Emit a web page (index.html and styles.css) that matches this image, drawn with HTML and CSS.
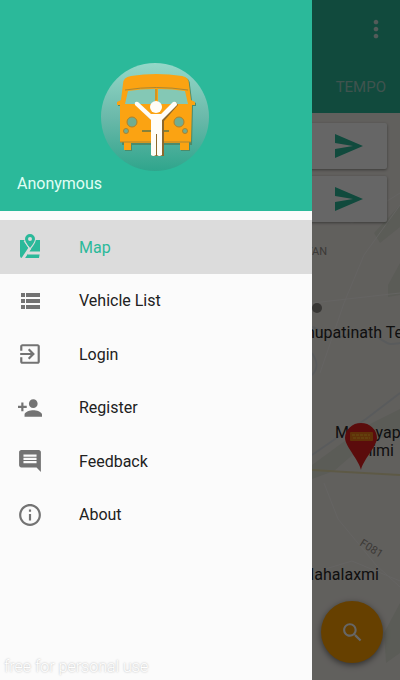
FILE: index.html
```html
<!DOCTYPE html>
<html lang="en">
<head>
    <meta charset="UTF-8">
    <meta name="viewport" content="width=device-width, initial-scale=1.0">
    <title>Map</title>
    <link rel="stylesheet" href="styles.css">
</head>
<body>
    <!-- Map screen -->
    <div class="screen">
        <header class="app-bar">
            <div class="toolbar">
                <button class="icon-button" type="button" aria-label="More options">
                    <svg viewBox="0 0 24 24" width="28" height="28"><path d="M12 8c1.1 0 2-.9 2-2s-.9-2-2-2-2 .9-2 2 .9 2 2 2zm0 2c-1.1 0-2 .9-2 2s.9 2 2 2 2-.9 2-2-.9-2-2-2zm0 6c-1.1 0-2 .9-2 2s.9 2 2 2 2-.9 2-2-.9-2-2-2z"/></svg>
                </button>
            </div>
            <nav class="tabs">
                <a class="tab" href="#tempo">TEMPO</a>
            </nav>
        </header>

        <main class="map">
            <svg class="map-canvas" viewBox="0 0 400 567" preserveAspectRatio="xMaxYMin slice">
                <rect width="400" height="567" fill="#f3efe9"/>
                <path class="green" d="M400 150L388 172 388 184 400 182zM400 92l-26 28 6 10 20-16zM312 352l30-22 30-20 28-14v22l-36 14-30 26-22 8zM384 520l16-30v50l-14 10z"/>
                <path class="river" d="M312 214c10 2 14 12 28 10s18-12 34-2 14 10 26 8M312 262c8-8 4-16 0-22M312 342l26-18 28-18 34-26"/>
                <path class="road" d="M312 90l40 20 48-30M320 260l24-70 20-48 36-50M312 190l88-10M324 370l14 36 38 46 24 22M312 460l40-12 48 20"/>
                <path class="highway" d="M312 357l34 2 54 3"/>
                <circle cx="317" cy="195" r="5" fill="#8c8984"/>
                <text class="district" x="327" y="142" text-anchor="end">YAN</text>
                <text class="place" x="279" y="225">Pashupatinath Temple</text>
                <text class="place" x="335" y="325">Madhyapur</text>
                <text class="place" x="394" y="343" text-anchor="end">Thimi</text>
                <text class="place" x="379" y="467" text-anchor="end">Mahalaxmi</text>
                <text class="road-name" transform="translate(359 432) rotate(32)">F081</text>
                <!-- Vehicle pin -->
                <path d="M361 357c-2-10-16-24-16-32a16 15 0 0 1 32 0c0 8-14 22-16 32z" fill="#e4201f"/>
                <rect x="350" y="319" width="23" height="9" rx="1" fill="#f07c14"/>
                <path d="M352 322h18M353 325h17" stroke="#ffc02e" stroke-dasharray="3 1"/>
            </svg>

            <form class="search">
                <div class="search-row">
                    <button class="send" type="button" aria-label="Set start">
                        <svg viewBox="0 0 28 24" width="28" height="24"><path d="M0 0L28 12 0 24V15L18 12 0 9z"/></svg>
                    </button>
                </div>
                <div class="search-row">
                    <button class="send" type="button" aria-label="Set destination">
                        <svg viewBox="0 0 28 24" width="28" height="24"><path d="M0 0L28 12 0 24V15L18 12 0 9z"/></svg>
                    </button>
                </div>
            </form>

            <button class="fab" type="button" aria-label="Search">
                <svg viewBox="0 0 24 24" width="25" height="25"><path d="M15.5 14h-.79l-.28-.27C15.41 12.59 16 11.11 16 9.5 16 5.91 13.09 3 9.5 3S3 5.91 3 9.5 5.91 16 9.5 16c1.61 0 3.09-.59 4.23-1.57l.27.28v.79l5 4.99L20.49 19l-4.99-5zm-6 0C7.01 14 5 11.99 5 9.5S7.01 5 9.5 5 14 7.01 14 9.5 11.99 14 9.5 14z"/></svg>
            </button>
        </main>
    </div>

    <div class="scrim"></div>

    <!-- Navigation drawer -->
    <aside class="drawer">
        <div class="drawer-header">
            <svg class="avatar" viewBox="0 0 110 110" width="110" height="110">
                <defs>
                    <linearGradient id="disc" x1="0" y1="0" x2="0" y2="1">
                        <stop offset="0" stop-color="#94d8c8"/>
                        <stop offset="0.5" stop-color="#6bb9aa"/>
                        <stop offset="1" stop-color="#2fa58c"/>
                    </linearGradient>
                </defs>
                <circle cx="54" cy="55" r="54" fill="url(#disc)"/>
                <path fill="#4b8b6c" transform="translate(1 1)" d="M30 14Q55 10 81 14Q88 15 88 22L90 38L94 40V43H91L90 82H88V88H79V82H30V88H23V82H20V43H16V40L20 38L22 22Q22 15 30 14z"/>
                <path fill="#fba312" d="M30 14Q55 10 81 14Q88 15 88 22L90 38L94 40V43H91L90 80H88V88H79V81H30V88H23V80H19V43H16V40L20 38L22 22Q22 15 30 14z"/>
                <path fill="#84c8b5" d="M27 29Q40 27 54 27V42H24zM57 27Q71 27 84 29L87 42H57z"/>
                <path fill="none" stroke="#a98735" d="M24 28Q55 23 87 28M55 27v11M19 80h71"/>
                <path fill="none" stroke="#87813a" stroke-width="2" d="M41 69h27"/>
                <g fill="#70ad91" stroke="#ad812d">
                    <circle cx="31" cy="60" r="5"/>
                    <circle cx="78" cy="60" r="5"/>
                    <circle cx="25" cy="69" r="2.5"/>
                    <circle cx="84" cy="69" r="2.5"/>
                </g>
                <path fill="#8c682c" transform="translate(1 1)" d="M35 39L49 52H61L74 39 76 42 62 58V93H50V58L34 42z"/>
                <circle cx="55" cy="45" r="6" fill="#fffdf7"/>
                <path fill="#fffdf7" d="M37 40L50 52H60L72 40Q76 39 76 43L61 58V93Q58 95 56 93V72H55V93Q52 95 50 93V58L34 43Q33 39 37 40z"/>
            </svg>
            <p class="user-name">Anonymous</p>
        </div>

        <nav class="menu">
            <a class="menu-item active" href="#map">
                <svg viewBox="0 0 24 28" width="24" height="28">
                    <path d="M2 7h20v12l-1 6H4a2 2 0 0 1-2-2z"/>
                    <path d="M12 15l-8 12M10 20h12" fill="none" stroke="#dcdcdc" stroke-width="3"/>
                    <path d="M12 0a6 6 0 0 0-6 6c0 4 6 11 6 11s6-7 6-11a6 6 0 0 0-6-6z" fill="#dcdcdc"/>
                    <path fill-rule="evenodd" d="M12 1a5 5 0 0 0-5 5c0 3 5 9 5 9s5-6 5-9a5 5 0 0 0-5-5zm0 3a2 2 0 1 1 0 4 2 2 0 0 1 0-4z"/>
                    <path d="M6 8l6 8" fill="none" stroke="#dcdcdc"/>
                </svg>
                <span>Map</span>
            </a>
            <a class="menu-item" href="#vehicles">
                <svg viewBox="0 0 24 24" width="24" height="24"><path d="M3 4h4v4H3zM8 4h14v4H8zM3 10h4v4H3zM8 10h14v4H8zM3 16h4v4H3zM8 16h14v4H8z"/></svg>
                <span>Vehicle List</span>
            </a>
            <a class="menu-item" href="#login">
                <svg viewBox="1 1 22 22" width="24" height="24"><path d="M10.09 15.59L11.5 17l5-5-5-5-1.41 1.41L12.67 11H3v2h9.67l-2.58 2.59zM19 3H5c-1.11 0-2 .9-2 2v4h2V5h14v14H5v-4H3v4c0 1.1.89 2 2 2h14c1.1 0 2-.9 2-2V5c0-1.1-.9-2-2-2z"/></svg>
                <span>Login</span>
            </a>
            <a class="menu-item" href="#register">
                <svg viewBox="1 1 22 22" width="24" height="24"><path d="M15 12c2.21 0 4-1.79 4-4s-1.79-4-4-4-4 1.79-4 4 1.79 4 4 4zm-9-2V7H4v3H1v2h3v3h2v-3h3v-2H6zm9 4c-2.67 0-8 1.34-8 4v2h16v-2c0-2.66-5.33-4-8-4z"/></svg>
                <span>Register</span>
            </a>
            <a class="menu-item" href="#feedback">
                <svg viewBox="1 1 22 22" width="24" height="24"><path d="M21.99 4c0-1.1-.89-2-1.99-2H4c-1.1 0-2 .9-2 2v12c0 1.1.9 2 2 2h14l4 4-.01-18zM18 14H6v-2h12v2zm0-3H6V9h12v2zm0-3H6V6h12v2z"/></svg>
                <span>Feedback</span>
            </a>
            <a class="menu-item" href="#about">
                <svg viewBox="1 1 22 22" width="24" height="24"><path d="M11 17h2v-6h-2v6zm1-15C6.48 2 2 6.48 2 12s4.48 10 10 10 10-4.48 10-10S17.52 2 12 2zm0 18c-4.41 0-8-3.59-8-8s3.59-8 8-8 8 3.59 8 8-3.59 8-8 8zM11 9h2V7h-2v2z"/></svg>
                <span>About</span>
            </a>
        </nav>

        <p class="license-note">free for personal use</p>
    </aside>
</body>
</html>
```

FILE: styles.css
```css
* {
    box-sizing: border-box;
}

body {
    font-family: Roboto, "Liberation Sans", sans-serif;
    font-size: 16px;
    color: #212121;
    margin: 0;
    overflow: hidden;
}

p {
    margin: 0;
}

a {
    color: inherit;
    text-decoration: none;
}

button {
    border: none;
    background: none;
    padding: 0;
    cursor: pointer;
}

svg {
    display: block;
    fill: currentColor;
}

/* Map screen */
.screen {
    display: flex;
    flex-direction: column;
    min-height: 100vh;
}

.app-bar {
    background: #2bb99a;
    color: #fff;
}

.toolbar {
    display: flex;
    justify-content: flex-end;
    align-items: center;
    height: 57px;
    padding-right: 10px;
}

.icon-button {
    color: #d0e4df;
}

.tabs {
    display: flex;
    justify-content: flex-end;
    align-items: center;
    height: 56px;
    padding: 4px 14px 0;
}

.tab {
    font-size: 15px;
    color: #9fd0c4;
}

.map {
    position: relative;
    flex: 1;
    display: flex;
    flex-direction: column;
    justify-content: space-between;
}

.map-canvas {
    position: absolute;
    inset: 0;
    width: 100%;
    height: 100%;
}

.green {
    fill: #e3e6d9;
}

.river,
.road,
.highway {
    fill: none;
    stroke: #dfe3e6;
    stroke-width: 2;
}

.road {
    stroke: #fbf9f5;
    stroke-width: 1;
}

.highway {
    stroke: #e8dfae;
}

.place {
    font-size: 16px;
    fill: #2a2928;
}

.district,
.road-name {
    font-size: 11px;
    fill: #96918a;
}

.search {
    position: relative;
    display: grid;
    gap: 7px;
    padding: 10px 13px;
}

.search-row {
    display: flex;
    justify-content: flex-end;
    height: 46px;
    padding-right: 24px;
    background: #fff;
    border-radius: 2px;
    box-shadow: 0 1px 3px rgba(0, 0, 0, 0.4);
}

.send {
    color: #2bb99a;
}

.fab {
    position: relative;
    display: grid;
    place-items: center;
    align-self: flex-end;
    width: 62px;
    height: 62px;
    margin: 0 17px 17px;
    border-radius: 50%;
    background: #ffa000;
    color: #fff;
    box-shadow: 0 2px 6px rgba(0, 0, 0, 0.5);
}

.scrim {
    position: fixed;
    inset: 0;
    background: rgba(0, 0, 0, 0.6);
}

/* Navigation drawer */
.drawer {
    position: fixed;
    top: 0;
    bottom: 0;
    left: 0;
    display: flex;
    flex-direction: column;
    width: 78%;
    max-width: 320px;
    background: #fbfbfb;
}

.drawer-header {
    display: flex;
    flex-direction: column;
    padding: 62px 17px 16px;
    background: #2bb99a;
    color: #e0fff5;
}

.avatar {
    align-self: center;
}

.user-name {
    line-height: 23px;
}

.menu {
    display: grid;
    grid-auto-rows: 1fr;
    height: 330px;
    padding-top: 9px;
}

.menu-item {
    display: grid;
    grid-template-columns: 24px 1fr;
    align-items: center;
    gap: 37px;
    padding: 1px 18px 0;
}

.menu-item svg {
    color: #737373;
}

.menu-item.active,
.menu-item.active svg {
    background: #dcdcdc;
    color: #2bb99a;
}

.license-note {
    margin-top: auto;
    padding: 0 4px 3px;
    font-weight: 300;
    line-height: 20px;
    color: #fff;
    text-shadow: 0 0 2px #aaa;
}
```
